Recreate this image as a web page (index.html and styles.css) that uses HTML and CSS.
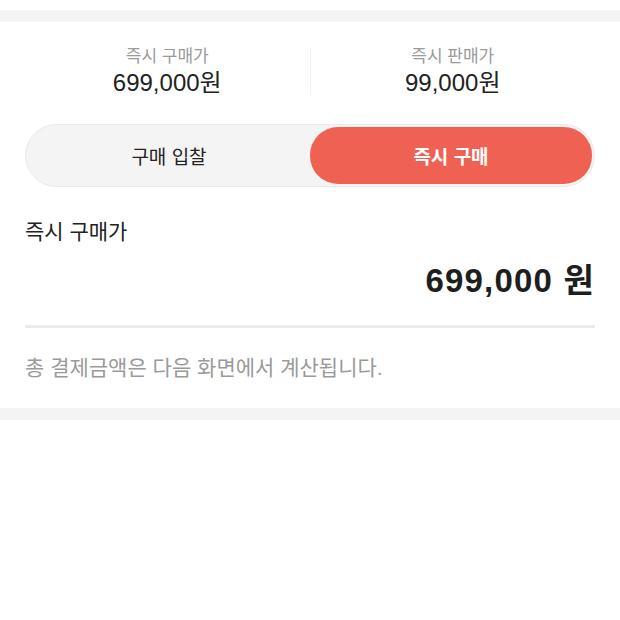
FILE: index.html
```html
<!DOCTYPE html>
<html lang="ko">
	<head>
		<meta charset="utf-8">
		<title>즉시 구매</title>
		<link rel="stylesheet" href="styles.css">
	</head>
	<body>

<div class="band"></div>

<div class="wrap">
	<div class="prices">
		<div class="price">
			<div class="price-label">즉시 구매가</div>
			<div class="price-value">699,000원</div>
		</div>
		<div class="price price-right">
			<div class="price-label">즉시 판매가</div>
			<div class="price-value">99,000원</div>
		</div>
	</div>

	<div class="toggle">
		<div class="tab">구매 입찰</div>
		<div class="tab tab-on">즉시 구매</div>
	</div>

	<div class="title">즉시 구매가</div>
	<div class="amount">699,000 원</div>
	<div class="line"></div>
	<p class="note">총 결제금액은 다음 화면에서 계산됩니다.</p>
</div>

<div class="band"></div>

	</body>
</html>
```

FILE: styles.css
```css
* { box-sizing: border-box; }

body {
	margin: 0;
	background: white;
	color: #222;
	font-family: "Liberation Sans", "Noto Sans CJK KR", sans-serif;
}

.band {
	height: 12px;
	margin-top: 10px;
	background: #f4f4f4;
}

.wrap {
	padding: 0 25px 16px;
}

.prices {
	display: flex;
	margin-top: 25px;
	height: 48px;
}

.price {
	flex: 1;
	text-align: center;
}

.price-right {
	border-left: 1px solid #f2f2f2;
}

.price-label {
	font-size: 17px;
	line-height: 20px;
	color: #9a9a9a;
}

.price-value {
	margin-top: 3px;
	font-size: 24px;
	line-height: 26px;
	color: #222;
}

.toggle {
	display: flex;
	margin-top: 29px;
	height: 63px;
	padding: 2px;
	border: 1px solid #e9e9e9;
	border-radius: 32px;
	background: #f4f4f4;
}

.tab {
	flex: 1;
	display: flex;
	align-items: center;
	justify-content: center;
	border-radius: 28px;
	font-size: 19px;
	color: #222;
}

.tab-on {
	background: #ef6253;
	color: white;
	font-weight: bold;
}

.title {
	margin-top: 32px;
	font-size: 21px;
	line-height: 26px;
	color: #222;
}

.amount {
	margin-top: 17px;
	text-align: right;
	font-size: 33px;
	line-height: 38px;
	font-weight: bold;
	letter-spacing: 1.2px;
	color: #1e1e1e;
}

.line {
	margin-top: 25px;
	height: 3px;
	background: #ebebeb;
}

.note {
	margin: 26px 0 0;
	font-size: 21px;
	line-height: 28px;
	color: #9a9a9a;
}
```
